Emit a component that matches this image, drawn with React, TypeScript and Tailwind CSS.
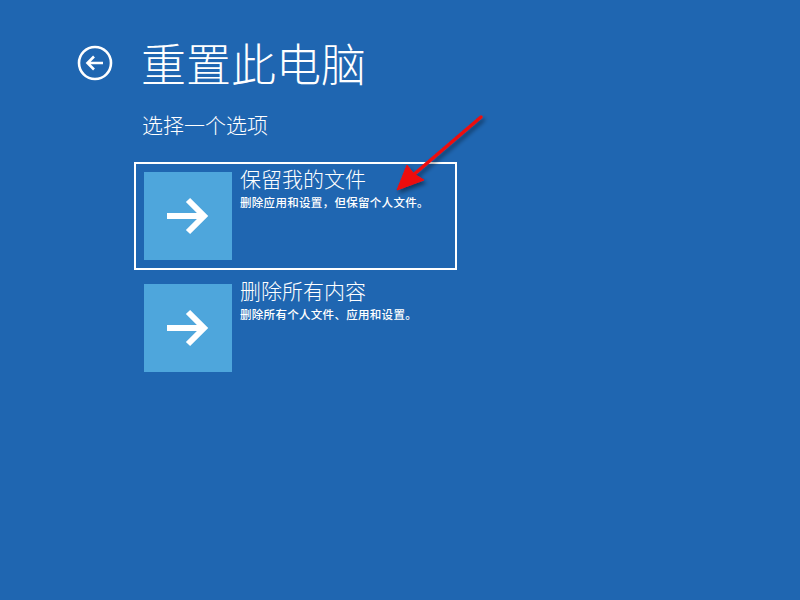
const font = { fontFamily: '"Noto Sans CJK SC", "Noto Sans", sans-serif' }

type Option = { title: string; desc: string; selected?: boolean }

const options: Option[] = [
  { title: '保留我的文件', desc: '删除应用和设置，但保留个人文件。', selected: true },
  { title: '删除所有内容', desc: '删除所有个人文件、应用和设置。' },
]

function BackIcon() {
  return (
    <svg width="36" height="36" viewBox="0 0 36 36" fill="none" stroke="white">
      <circle cx="18" cy="18" r="16" strokeWidth="2.6" />
      <path d="M26 18H10.5M17 11.5L10.5 18L17 24.5" strokeWidth="2.6" />
    </svg>
  )
}

function OptionCard({ title, desc, selected }: Option) {
  return (
    <button
      className={`flex w-[323px] gap-2 border-2 p-2 text-left ${selected ? 'border-white' : 'border-transparent'}`}
    >
      <div className="flex h-[88px] w-[88px] shrink-0 items-center justify-center bg-[#4ea6dc]">
        <svg width="44" height="40" viewBox="0 0 44 40" fill="none" stroke="white" strokeWidth="6" strokeLinejoin="miter">
          <path d="M1 20H38" />
          <path d="M22 4L38 20L22 36" />
        </svg>
      </div>
      <div className="-mt-[4px] flex flex-col text-white">
        <span className="text-[21px] leading-[21px] font-light">{title}</span>
        <span className="mt-[7px] text-[11.5px] leading-[12px] font-medium tracking-[0.3px]">{desc}</span>
      </div>
    </button>
  )
}

export default function App() {
  return (
    <div className="relative h-[600px] w-[800px] overflow-hidden bg-[#1f66b1] text-white" style={font}>
      <div className="flex items-center pt-[40px] pl-[77px]">
        <BackIcon />
        <h1 className="ml-[28px] text-[45px] leading-[45px] font-light">重置此电脑</h1>
      </div>

      <p className="mt-[29px] pl-[142px] text-[21px] leading-[21px] font-light">选择一个选项</p>

      <div className="mt-[27px] flex flex-col gap-[4px] pl-[134px]">
        {options.map((o) => (
          <OptionCard key={o.title} {...o} />
        ))}
      </div>

      {/* red pointer arrow */}
      <svg className="pointer-events-none absolute top-0 left-0" width="800" height="600">
        <defs>
          <filter id="shade" x="-20%" y="-20%" width="140%" height="140%">
            <feDropShadow dx="2" dy="3" stdDeviation="2" floodColor="#000" floodOpacity="0.45" />
          </filter>
        </defs>
        <g filter="url(#shade)" fill="#ee1111" stroke="#ee1111">
          <line x1="481" y1="117" x2="412" y2="176" strokeWidth="3.5" strokeLinecap="round" />
          <polygon points="397,190 407,165 414,174 424,180" strokeWidth="1" strokeLinejoin="round" />
        </g>
      </svg>
    </div>
  )
}
